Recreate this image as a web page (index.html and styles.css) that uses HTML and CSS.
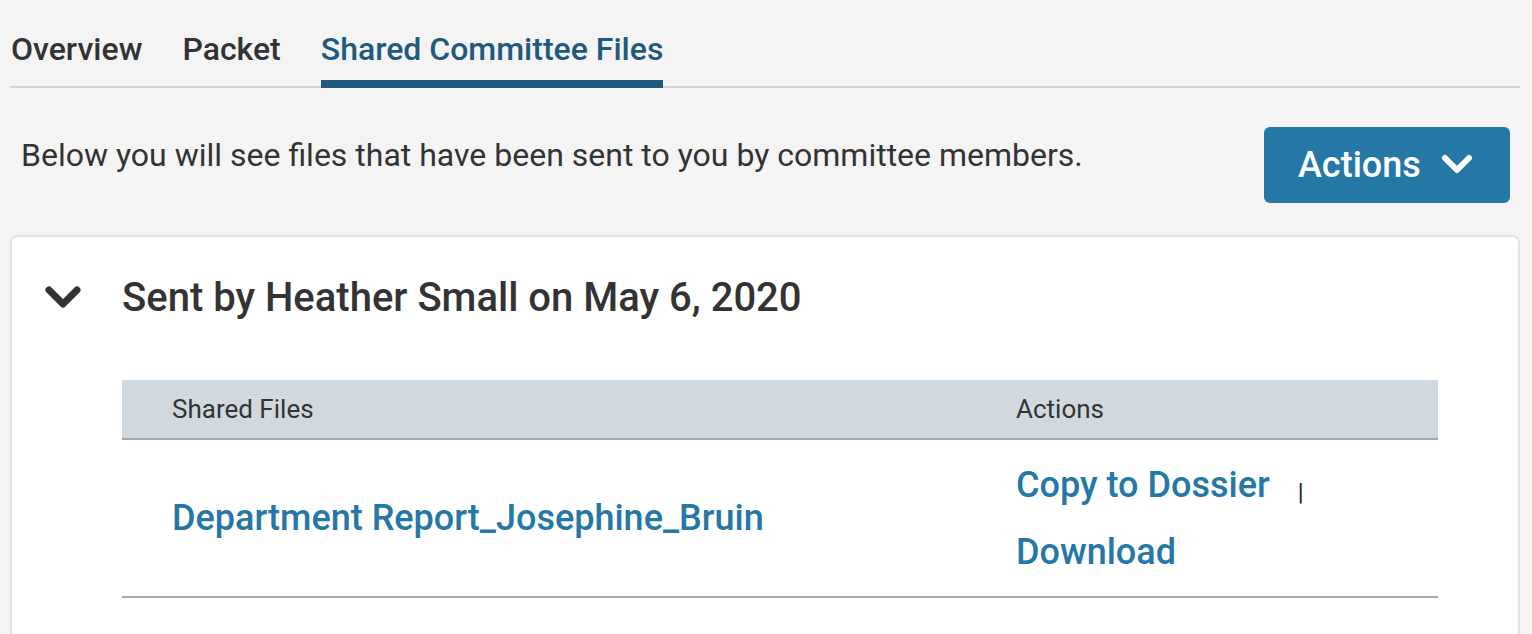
FILE: index.html
```html
<!DOCTYPE html>
<html lang="en">
<head>
<meta charset="utf-8">
<title>Shared Committee Files</title>
<link rel="stylesheet" href="styles.css">
</head>
<body>
<div class="page">
  <nav class="tabs">
    <a class="tab">Overview</a>
    <a class="tab">Packet</a>
    <a class="tab active">Shared Committee Files</a>
  </nav>
  <div class="intro">
    <p class="intro-text">Below you will see files that have been sent to you by committee members.</p>
    <button class="btn-actions">Actions
      <svg class="btn-chev" viewBox="0 0 32 22" width="32" height="22"><path d="M4 4 L16 16 L28 4" fill="none" stroke="#fff" stroke-width="6" stroke-linecap="round" stroke-linejoin="round"/></svg>
    </button>
  </div>
  <section class="card">
    <div class="card-head">
      <svg class="card-chev" viewBox="0 0 38 26" width="38" height="26"><path d="M5 5 L19 19 L33 5" fill="none" stroke="#333" stroke-width="7" stroke-linecap="round" stroke-linejoin="round"/></svg>
      <h2 class="card-title">Sent by Heather Small on May 6, 2020</h2>
    </div>
    <table class="files">
      <thead>
        <tr><th class="col-name">Shared Files</th><th class="col-act">Actions</th></tr>
      </thead>
      <tbody>
        <tr>
          <td class="col-name"><a class="link">Department Report_Josephine_Bruin</a></td>
          <td class="col-act">
            <div class="act-line"><a class="link">Copy to Dossier</a><span class="sep">|</span></div>
            <div class="act-line"><a class="link">Download</a></div>
          </td>
        </tr>
      </tbody>
    </table>
  </section>
</div>
</body>
</html>
```
FILE: styles.css
```css
* { box-sizing: border-box; }
html, body { margin: 0; padding: 0; }
body {
  background: #f4f4f4;
  font-family: Roboto, "Liberation Sans", sans-serif;
  color: #333;
  overflow: hidden;
  height: 634px;
}
.page {
  padding: 33px 12px 0 10px;
}
.tabs {
  display: flex;
  gap: 40px;
  border-bottom: 2px solid #d4d4d4;
  padding-left: 1px;
}
.tab {
  font-size: 32px;
  font-weight: 500;
  line-height: 33px;
  color: #333;
  padding-bottom: 14px;
  border-bottom: 8px solid transparent;
  margin-bottom: -2px;
  cursor: pointer;
}
.tab.active {
  color: #1f5a7e;
  border-bottom-color: #1f5a7e;
}
.intro {
  display: flex;
  align-items: flex-start;
  justify-content: space-between;
  padding: 39px 10px 0 11px;
}
.intro-text {
  margin: 10px 0 0;
  font-size: 32px;
  line-height: 36px;
  color: #333;
}
.btn-actions {
  display: flex;
  align-items: center;
  gap: 20px;
  height: 76px;
  width: 246px;
  padding: 0 0 0 34px;
  background: #2577a6;
  border: none;
  border-radius: 6px;
  color: #fff;
  font-family: Roboto, "Liberation Sans", sans-serif;
  font-size: 36px;
  font-weight: 500;
}
.btn-chev { display: block; }
.card {
  margin-top: 32px;
  background: #fff;
  border: 2px solid #e0e3e6;
  border-radius: 8px;
  padding: 39px 80px 40px 32px;
  height: 420px;
}
.card-head {
  display: flex;
  align-items: flex-start;
  gap: 40px;
}
.card-chev { display: block; margin-top: 9px; }
.card-title {
  margin: 0;
  font-size: 40px;
  font-weight: 500;
  line-height: 44px;
  color: #333;
}
.files {
  width: 1316px;
  margin: 60px 0 0 78px;
  border-collapse: collapse;
}
.files thead tr {
  background: #cfd9df;
  border-bottom: 2px solid #a9a9a9;
}
.files th {
  font-size: 26px;
  font-weight: 400;
  text-align: left;
  height: 59px;
  padding: 0 0 0 50px;
  color: #333;
}
.files th.col-name, .files td.col-name { width: 844px; }
.files tbody tr { border-bottom: 2px solid #aaa; }
.files td {
  padding: 0 0 0 50px;
  height: 158px;
  vertical-align: middle;
}
.link {
  color: #2577a6;
  font-size: 36px;
  font-weight: 500;
  cursor: pointer;
}
.act-line {
  display: flex;
  align-items: baseline;
  height: 67px;
  padding-top: 13px;
}
.sep {
  color: #222;
  font-size: 24px;
  margin-left: 28px;
  position: relative;
  top: 3px;
}
```
